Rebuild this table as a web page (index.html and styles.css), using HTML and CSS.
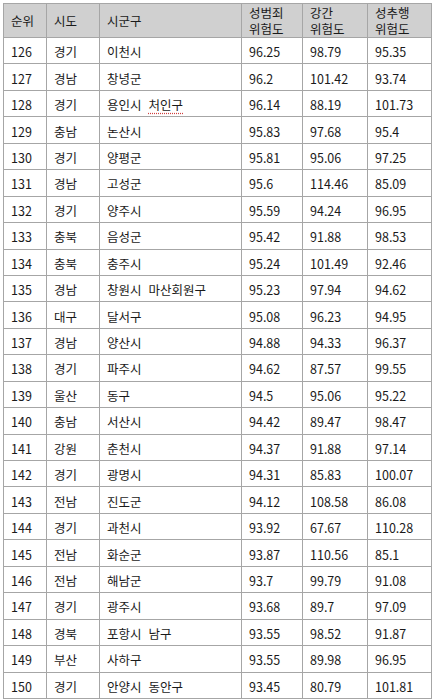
FILE: index.html
```html
<!DOCTYPE html>
<html lang="ko">
<head>
<meta charset="utf-8">
<link rel="stylesheet" href="styles.css">
</head>
<body>
<table class="grid">
<colgroup>
<col class="c-rank"><col class="c-sido"><col class="c-sgg"><col class="c-a"><col class="c-b"><col class="c-c">
</colgroup>
<thead>
<tr class="head">
<th>순위</th><th>시도</th><th>시군구</th><th>성범죄<br>위험도</th><th>강간<br>위험도</th><th>성추행<br>위험도</th>
</tr>
</thead>
<tbody>
<tr><td>126</td><td>경기</td><td>이천시</td><td>96.25</td><td>98.79</td><td>95.35</td></tr>
<tr><td>127</td><td>경남</td><td>창녕군</td><td>96.2</td><td>101.42</td><td>93.74</td></tr>
<tr><td>128</td><td>경기</td><td>용인시&nbsp; <span class="spell">처인구</span></td><td>96.14</td><td>88.19</td><td>101.73</td></tr>
<tr><td>129</td><td>충남</td><td>논산시</td><td>95.83</td><td>97.68</td><td>95.4</td></tr>
<tr><td>130</td><td>경기</td><td>양평군</td><td>95.81</td><td>95.06</td><td>97.25</td></tr>
<tr><td>131</td><td>경남</td><td>고성군</td><td>95.6</td><td>114.46</td><td>85.09</td></tr>
<tr><td>132</td><td>경기</td><td>양주시</td><td>95.59</td><td>94.24</td><td>96.95</td></tr>
<tr><td>133</td><td>충북</td><td>음성군</td><td>95.42</td><td>91.88</td><td>98.53</td></tr>
<tr><td>134</td><td>충북</td><td>충주시</td><td>95.24</td><td>101.49</td><td>92.46</td></tr>
<tr><td>135</td><td>경남</td><td>창원시&nbsp; 마산회원구</td><td>95.23</td><td>97.94</td><td>94.62</td></tr>
<tr><td>136</td><td>대구</td><td>달서구</td><td>95.08</td><td>96.23</td><td>94.95</td></tr>
<tr><td>137</td><td>경남</td><td>양산시</td><td>94.88</td><td>94.33</td><td>96.37</td></tr>
<tr><td>138</td><td>경기</td><td>파주시</td><td>94.62</td><td>87.57</td><td>99.55</td></tr>
<tr><td>139</td><td>울산</td><td>동구</td><td>94.5</td><td>95.06</td><td>95.22</td></tr>
<tr><td>140</td><td>충남</td><td>서산시</td><td>94.42</td><td>89.47</td><td>98.47</td></tr>
<tr><td>141</td><td>강원</td><td>춘천시</td><td>94.37</td><td>91.88</td><td>97.14</td></tr>
<tr><td>142</td><td>경기</td><td>광명시</td><td>94.31</td><td>85.83</td><td>100.07</td></tr>
<tr><td>143</td><td>전남</td><td>진도군</td><td>94.12</td><td>108.58</td><td>86.08</td></tr>
<tr><td>144</td><td>경기</td><td>과천시</td><td>93.92</td><td>67.67</td><td>110.28</td></tr>
<tr><td>145</td><td>전남</td><td>화순군</td><td>93.87</td><td>110.56</td><td>85.1</td></tr>
<tr><td>146</td><td>전남</td><td>해남군</td><td>93.7</td><td>99.79</td><td>91.08</td></tr>
<tr><td>147</td><td>경기</td><td>광주시</td><td>93.68</td><td>89.7</td><td>97.09</td></tr>
<tr><td>148</td><td>경북</td><td>포항시&nbsp; 남구</td><td>93.55</td><td>98.52</td><td>91.87</td></tr>
<tr><td>149</td><td>부산</td><td>사하구</td><td>93.55</td><td>89.98</td><td>96.95</td></tr>
<tr><td>150</td><td>경기</td><td>안양시&nbsp; 동안구</td><td>93.45</td><td>80.79</td><td>101.81</td></tr>
</tbody>
</table>
</body>
</html>
```
FILE: styles.css
```css
html, body {
  margin: 0;
  padding: 0;
  background: #ffffff;
}
body {
  padding: 3px 0 0 3px;
  font-family: "Noto Sans CJK KR", "Noto Sans", sans-serif;
  font-size: 12.5px;
  color: #1a1a1a;
}
.grid {
  border-collapse: collapse;
  table-layout: fixed;
  width: 428px;
  border: 1px solid #8c8c8c;
}
.c-rank { width: 43px; }
.c-sido { width: 53px; }
.c-sgg { width: 142px; }
.c-a { width: 61px; }
.c-b { width: 65px; }
.c-c { width: 64px; }
.grid th, .grid td {
  border: 1px solid #a6a6a6;
  padding: 0 0 0 7px;
  text-align: left;
  white-space: nowrap;
  overflow: hidden;
  line-height: 16px;
}
.head th {
  background: #d0d0d0;
  font-weight: normal;
  height: 32px;
  vertical-align: middle;
  padding-top: 1px;
  box-sizing: border-box;
}
.grid tbody tr {
  height: 26.44px;
}
.grid td {
  vertical-align: middle;
  padding-top: 3px;
}
.spell {
  text-decoration: underline dotted #d04040;
  text-underline-offset: 3px;
}
```
